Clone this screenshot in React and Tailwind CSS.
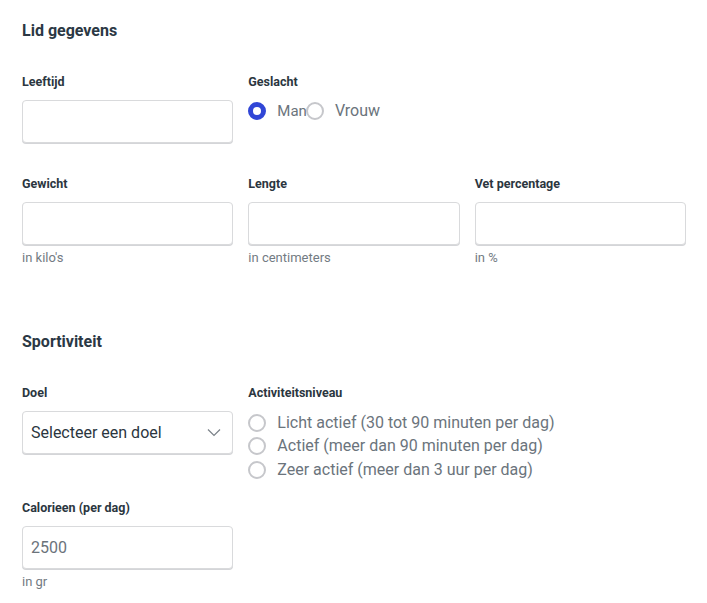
import React, { useState } from 'react';

const Label = ({ children }) => (
  <div className="text-[12.5px] leading-[18px] font-bold text-[#2b3640] mb-[9px]">{children}</div>
);

const Help = ({ children }) => (
  <div className="text-[13px] leading-[16px] text-[#737b83] mt-[5px]">{children}</div>
);

const inputCls =
  'w-full h-[43px] rounded-[4px] border border-[#d9dadc] shadow-[0_1px_0_#d4d5d8] bg-white px-[8px] text-[16px] text-[#6b737b] outline-none';

const Field = ({ label, help, value }) => (
  <div>
    <Label>{label}</Label>
    <input className={inputCls} defaultValue={value} />
    {help && <Help>{help}</Help>}
  </div>
);

const Radio = ({ checked, label, onClick, size = 'text-[16px]' }) => (
  <label className="flex items-center h-[23.5px] cursor-pointer" onClick={onClick}>
    <span
      className={
        checked
          ? 'w-[18px] h-[18px] rounded-full border-[5px] border-[#3146d6] bg-white shrink-0'
          : 'w-[18px] h-[18px] rounded-full border-2 border-[#c6c7cb] bg-white shrink-0'
      }
    />
    <span className={'ml-[11px] text-[#6b747c] ' + size}>{label}</span>
  </label>
);

export default function App() {
  const [gender, setGender] = useState('man');
  const [level, setLevel] = useState(null);
  const levels = [
    'Licht actief (30 tot 90 minuten per dag)',
    'Actief (meer dan 90 minuten per dag)',
    'Zeer actief (meer dan 3 uur per dag)',
  ];

  return (
    <div className="bg-white min-h-[603px] pl-[22px] pr-[21px] pt-[19px] font-['Roboto',sans-serif]">
      <h2 className="text-[16px] leading-[24px] font-bold text-[#2b3844]">Lid gegevens</h2>

      <div className="grid grid-cols-3 gap-x-[15px] mt-[30px]">
        <Field label="Leeftijd" />
        <div>
          <Label>Geslacht</Label>
          <div className="flex items-center h-[22px]">
            <Radio checked={gender === 'man'} label="Man" size="text-[15px]" onClick={() => setGender('man')} />
            <span className="-ml-[1px]">
              <Radio checked={gender === 'vrouw'} label="Vrouw" onClick={() => setGender('vrouw')} />
            </span>
          </div>
        </div>
        <div />
      </div>

      <div className="grid grid-cols-3 gap-x-[15px] mt-[32px]">
        <Field label="Gewicht" help="in kilo's" />
        <Field label="Lengte" help="in centimeters" />
        <Field label="Vet percentage" help="in %" />
      </div>

      <h2 className="text-[16px] leading-[24px] font-bold text-[#2b3844] mt-[64px]">Sportiviteit</h2>

      <div className="grid grid-cols-3 gap-x-[15px] mt-[30px]">
        <div>
          <Label>Doel</Label>
          <div className="relative h-[43px] rounded-[4px] border border-[#d9dadc] shadow-[0_1px_0_#d4d5d8] bg-white flex items-center px-[8px]">
            <span className="text-[16px] text-[#2b3640]">Selecteer een doel</span>
            <svg className="absolute right-[11px] top-[16px]" width="14" height="9" viewBox="0 0 14 9" fill="none">
              <path d="M1 1.5l6 6 6-6" stroke="#7a8188" strokeWidth="1.2" />
            </svg>
          </div>
        </div>
        <div className="col-span-2">
          <Label>Activiteitsniveau</Label>
          <div>
            {levels.map((l, i) => (
              <Radio key={i} checked={level === i} label={l} onClick={() => setLevel(i)} />
            ))}
          </div>
        </div>
      </div>

      <div className="grid grid-cols-3 gap-x-[15px] mt-[17px]">
        <Field label="Calorieen (per dag)" help="in gr" value="2500" />
      </div>
    </div>
  );
}
